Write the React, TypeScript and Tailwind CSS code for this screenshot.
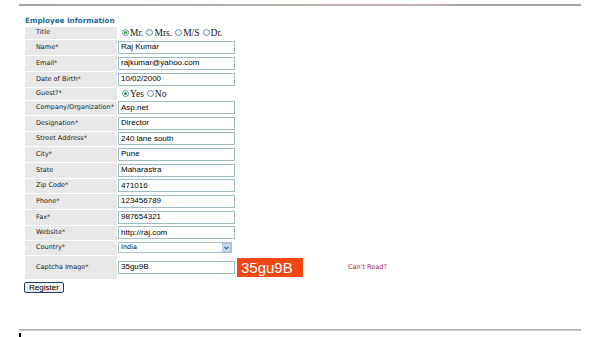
import React from "react";

const lbl = "font-['DejaVu_Sans',sans-serif] text-[6.5px] text-[#222]";

function Radio({ on }: { on?: boolean }) {
  return (
    <span className="inline-flex items-center justify-center w-[7px] h-[7px] rounded-full border border-[#5a86b4] bg-white">
      {on && <span className="w-[3px] h-[3px] rounded-full bg-[#2e9a2e]" />}
    </span>
  );
}

function RadioGroup({ items, sel }: { items: string[]; sel: number }) {
  return (
    <div className="flex items-center pl-[4px] font-['Liberation_Serif',serif] text-[9.5px] text-[#111]">
      {items.map((t, i) => (
        <span key={t} className="flex items-center mr-[3px]">
          <Radio on={i === sel} />
          <span className="ml-[1px]">{t}</span>
        </span>
      ))}
    </div>
  );
}

function TextBox({ v }: { v: string }) {
  return (
    <div className="w-[117px] h-[13px] border border-[#9fbcc2] bg-white flex items-center pl-[2px] font-['Liberation_Sans',sans-serif] text-[8px] text-black leading-none">
      {v}
    </div>
  );
}

type Row = { label: string; h: number; kind: "text" | "radio" | "select" | "captcha"; v?: string; items?: string[] };

const rows: Row[] = [
  { label: "Title", h: 12, kind: "radio", items: ["Mr.", "Mrs.", "M/S", "Dr."] },
  { label: "Name*", h: 15, kind: "text", v: "Raj Kumar" },
  { label: "Email*", h: 15, kind: "text", v: "rajkumar@yahoo.com" },
  { label: "Date of Birth*", h: 15, kind: "text", v: "10/02/2000" },
  { label: "Guest?*", h: 12, kind: "radio", items: ["Yes", "No"] },
  { label: "Company/Organization*", h: 14, kind: "text", v: "Asp.net" },
  { label: "Designation*", h: 15, kind: "text", v: "Director" },
  { label: "Street Address*", h: 14, kind: "text", v: "240 lane south" },
  { label: "City*", h: 15, kind: "text", v: "Pune" },
  { label: "State", h: 15, kind: "text", v: "Maharastra" },
  { label: "Zip Code*", h: 14, kind: "text", v: "471016" },
  { label: "Phone*", h: 15, kind: "text", v: "123456789" },
  { label: "Fax*", h: 15, kind: "text", v: "987654321" },
  { label: "Website*", h: 14, kind: "text", v: "http://raj.com" },
  { label: "Country*", h: 14, kind: "select", v: "India" },
  { label: "Captcha Image*", h: 23, kind: "captcha", v: "35gu9B" },
];

export default function App() {
  return (
    <div className="w-[603px] h-[337px] bg-white overflow-hidden flex flex-col">
      <div className="ml-[19px] mt-[4px] w-[562px] h-[2px] bg-[linear-gradient(to_right,#a3a3a3,#c7b3ab_74%,#a3a3a3_78%,#a3a3a3)]" />
      <div className="ml-[25px] mt-[10px] h-[10px] leading-[10px] font-['DejaVu_Sans',sans-serif] font-bold text-[7.2px] text-[#1b6a9c]">
        Employee Information
      </div>
      <div className="ml-[25px] mt-[1px] flex flex-col gap-y-[1px]">
        {rows.map((r) => (
          <div key={r.label} className="flex" style={{ height: r.h }}>
            <div className={`w-[92px] bg-[#e8e8e8] flex items-center pl-[11px] ${lbl}`}>{r.label}</div>
            <div className="flex items-center pl-[1px]">
              {r.kind === "text" && <TextBox v={r.v!} />}
              {r.kind === "radio" && <RadioGroup items={r.items!} sel={0} />}
              {r.kind === "select" && (
                <div className="w-[114px] h-[11px] border border-[#a7bfd0] bg-white flex items-center justify-between">
                  <span className={`pl-[2px] ${lbl} text-black`}>India</span>
                  <span className="w-[9px] h-[9px] bg-[#c9d8f3] border border-[#b6c8ea] flex items-center justify-center">
                    <svg width="5" height="4" viewBox="0 0 5 4">
                      <path d="M0.5 0.8 L2.5 2.8 L4.5 0.8" stroke="#2a4f8f" strokeWidth="1.1" fill="none" />
                    </svg>
                  </span>
                </div>
              )}
              {r.kind === "captcha" && (
                <div className="flex items-center">
                  <TextBox v={r.v!} />
                  <div className="ml-[2px] w-[66px] h-[19px] bg-[#f24613] flex items-center pl-[4px] font-['Liberation_Sans',sans-serif] text-[15px] text-white leading-none">
                    35gu9B
                  </div>
                  <div className={`ml-[45px] ${lbl} text-[#a3223f]`}>Can't Read?</div>
                </div>
              )}
            </div>
          </div>
        ))}
      </div>
      <div className="ml-[24px] mt-[3px] w-[40px] h-[12px] border border-[#1f3f74] rounded-[2px] bg-[linear-gradient(to_bottom,#ffffff,#e6e4dc)] flex items-center justify-center font-['Liberation_Sans',sans-serif] text-[8px] text-black leading-none">
        Register
      </div>
      <div className="ml-[19px] mt-[36px] w-[562px] h-[2px] bg-[linear-gradient(to_bottom,#a9a9a9,#d4d4d4)]" />
      <div className="ml-[19px] mt-[2px] w-[2px] h-[4px] bg-black" />
    </div>
  );
}
